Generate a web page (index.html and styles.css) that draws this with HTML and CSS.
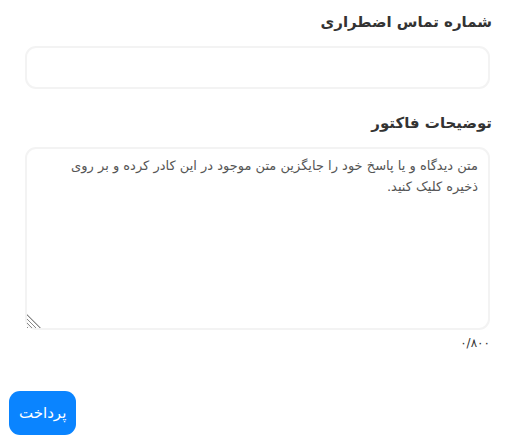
FILE: index.html
```html
<!DOCTYPE html>
<html lang="fa" dir="rtl">
<head>
<meta charset="utf-8">
<link rel="stylesheet" href="styles.css">
</head>
<body>
<div class="page">
  <div class="fields">
    <div class="field">
      <label class="label" for="phone">شماره تماس اضطراری</label>
      <input class="input" id="phone" type="text">
    </div>
    <div class="field field-notes">
      <label class="label" for="notes">توضیحات فاکتور</label>
      <div class="textarea-wrap">
        <textarea class="textarea" id="notes">متن دیدگاه و یا پاسخ خود را جایگزین متن موجود در این کادر کرده و بر روی ذخیره کلیک کنید.</textarea>
        <span class="grip"></span>
      </div>
      <div class="counter">۰/۸۰۰</div>
    </div>
  </div>
  <div class="actions">
    <button class="btn" type="button">پرداخت</button>
  </div>
</div>
</body>
</html>
```
FILE: styles.css
```css
html, body {
  margin: 0;
  padding: 0;
  background: #fff;
}
body {
  font-family: "DejaVu Sans", "Noto Sans", sans-serif;
  color: #333;
}
.page {
  padding: 0 17px 0 9px;
}
.fields {
  margin-left: 16px;
  padding-top: 10px;
}
.field {
  display: flex;
  flex-direction: column;
}
.label {
  font-size: 15px;
  font-weight: bold;
  color: #333;
  line-height: 24px;
  margin-bottom: 12px;
  margin-right: -2px;
}
.input {
  height: 43px;
  box-sizing: border-box;
  border: 2px solid #f3f3f3;
  border-radius: 11px;
  outline: none;
  font: inherit;
  padding: 0 12px;
}
.field-notes {
  margin-top: 22px;
}
.textarea-wrap {
  position: relative;
  display: flex;
}
.textarea {
  flex: 1;
  height: 183px;
  box-sizing: border-box;
  border: 2px solid #f3f3f3;
  border-radius: 11px;
  outline: none;
  font-family: inherit;
  font-size: 13px;
  line-height: 21px;
  color: #555;
  padding: 6px 10px;
  resize: none;
}
.grip {
  position: absolute;
  left: 2px;
  bottom: 2px;
  width: 14px;
  height: 14px;
  background: repeating-linear-gradient(45deg, #8a8a8a 0 1px, transparent 1px 3px);
  clip-path: polygon(0 0, 0 100%, 100% 100%);
  pointer-events: none;
}
.counter {
  font-size: 12px;
  color: #333;
  line-height: 16px;
  margin-top: 5px;
}
.actions {
  display: flex;
  justify-content: flex-end;
  margin-top: 40px;
}
.btn {
  background: #0a84ff;
  color: #fff;
  border: none;
  border-radius: 11px;
  height: 44px;
  padding: 0 10px;
  font-family: inherit;
  font-size: 15px;
  cursor: pointer;
}
```
